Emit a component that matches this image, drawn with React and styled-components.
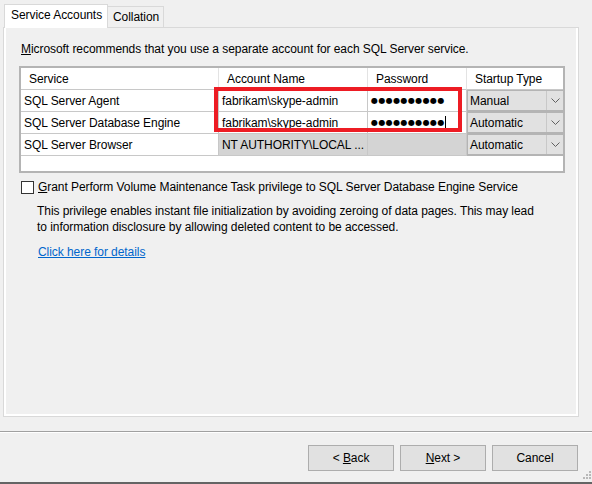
import React from "react";
import styled, { createGlobalStyle } from "styled-components";

const GlobalStyle = createGlobalStyle`
  html, body {
    margin: 0;
    padding: 0;
    background: #f0f0f0;
  }
  body {
    font-family: "Liberation Sans", Arial, sans-serif;
    font-size: 12px;
    letter-spacing: -0.06px;
    color: #000;
  }
`;

const services = [
  { name: "SQL Server Agent", account: "fabrikam\\skype-admin", password: true, startup: "Manual" },
  { name: "SQL Server Database Engine", account: "fabrikam\\skype-admin", password: true, caret: true, startup: "Automatic" },
  { name: "SQL Server Browser", account: "NT AUTHORITY\\LOCAL ...", disabled: true, startup: "Automatic" },
];

const App = () => {
  return (
    <Window>
      <GlobalStyle />
      <TabStrip>
        <Tab $active>Service Accounts</Tab>
        <Tab>Collation</Tab>
      </TabStrip>

      <Panel>
        <Intro>
          <u>M</u>icrosoft recommends that you use a separate account for each SQL Server service.
        </Intro>

        <TableWrap>
          <Grid>
            <HeadCell>Service</HeadCell>
            <HeadCell>Account Name</HeadCell>
            <HeadCell>Password</HeadCell>
            <HeadCell $last>Startup Type</HeadCell>

            {services.map((s) => (
              <React.Fragment key={s.name}>
                <Cell>{s.name}</Cell>
                <Cell $disabled={s.disabled}>{s.account}</Cell>
                <Cell $disabled={s.disabled}>
                  {s.password && <Dots>●●●●●●●●●●</Dots>}
                  {s.caret && <Caret />}
                </Cell>
                <Combo>
                  <ComboText>{s.startup}</ComboText>
                  <ComboButton>
                    <svg width="9" height="5" viewBox="0 0 9 5">
                      <path d="M0.5 0.5 L4.5 4.5 L8.5 0.5" fill="none" stroke="#606060" strokeWidth="1" />
                    </svg>
                  </ComboButton>
                </Combo>
              </React.Fragment>
            ))}
          </Grid>
          <EmptyArea />
          <Highlight />
        </TableWrap>

        <CheckRow>
          <CheckBox />
          <span>
            <u>G</u>rant Perform Volume Maintenance Task privilege to SQL Server Database Engine Service
          </span>
        </CheckRow>

        <Description>
          This privilege enables instant file initialization by avoiding zeroing of data pages. This may lead
          <br />
          to information disclosure by allowing deleted content to be accessed.
        </Description>

        <DetailsLink href="#">Click here for details</DetailsLink>
      </Panel>

      <Separator />

      <ButtonBar>
        <Button>
          &lt; <u>B</u>ack
        </Button>
        <Button>
          <u>N</u>ext &gt;
        </Button>
        <Button>Cancel</Button>
      </ButtonBar>

      <Grip>
        <svg width="10" height="10" viewBox="0 0 10 10">
          {[
            [8, 0], [8, 3], [5, 3], [8, 6], [5, 6], [2, 6],
          ].map(([x, y]) => (
            <rect key={`${x}-${y}`} x={x} y={y} width="2" height="2" fill="#b8b8b8" />
          ))}
        </svg>
      </Grip>
      <BottomEdge />
    </Window>
  );
};

const Window = styled.div`
  position: relative;
  width: 592px;
  height: 484px;
  display: flex;
  flex-direction: column;
  overflow: hidden;
  background: #f0f0f0;
`;

const TabStrip = styled.div`
  display: flex;
  align-items: flex-end;
  height: 27px;
  padding-left: 4px;
  box-sizing: border-box;
  position: relative;
  z-index: 1;
`;

const Tab = styled.div`
  box-sizing: border-box;
  height: ${(p) => (p.$active ? "24px" : "21px")};
  margin-bottom: ${(p) => (p.$active ? "-1px" : "0")};
  padding: ${(p) => (p.$active ? "3px 4px 0 6px" : "3px 3px 0 5px")};
  width: ${(p) => (p.$active ? "104px" : "57px")};
  border: 1px solid #d9d9d9;
  border-bottom: none;
  margin-left: ${(p) => (p.$active ? "0" : "-1px")};
  background: ${(p) => (p.$active ? "#ffffff" : "#f0f0f0")};
  white-space: nowrap;
  line-height: 15px;
`;

const Panel = styled.div`
  box-sizing: border-box;
  margin-left: 3px;
  width: 576px;
  height: 390px;
  border: 1px solid #d9d9d9;
  box-shadow: inset 2px 0 0 #fff, inset -2px 0 0 #fff, inset 0 -2px 0 #fff;
  padding: 14px 0 0 15px;
  display: flex;
  flex-direction: column;
  align-items: flex-start;
`;

const Intro = styled.div`
  margin-left: 2px;
  line-height: 15px;
  white-space: nowrap;
`;

const TableWrap = styled.div`
  position: relative;
  margin-top: 9px;
  width: 546px;
  box-sizing: border-box;
  border: 2px solid #b4b4b4;
  background: #fff;
`;

const Grid = styled.div`
  display: grid;
  grid-template-columns: 198px 149px 99px 96px;
  grid-auto-rows: 22px;
`;

const HeadCell = styled.div`
  box-sizing: border-box;
  padding: 0 0 0 8px;
  display: flex;
  align-items: center;
  border-right: ${(p) => (p.$last ? "none" : "1px solid #e3e3e3")};
  border-bottom: 1px solid #c8c8c8;
  white-space: nowrap;
`;

const Cell = styled.div`
  box-sizing: border-box;
  padding: 0 0 0 3px;
  display: flex;
  align-items: center;
  border-right: 1px solid #c8c8c8;
  border-bottom: 1px solid #c8c8c8;
  background: ${(p) => (p.$disabled ? "#d4d4d4" : "#fff")};
  white-space: nowrap;
  overflow: hidden;
`;

const Dots = styled.span`
  font-family: "DejaVu Sans", sans-serif;
  font-size: 8px;
  letter-spacing: 0.4px;
  line-height: 1;
`;

const Caret = styled.span`
  display: inline-block;
  width: 1px;
  height: 14px;
  background: #000;
  margin-left: 0;
`;

const Combo = styled.div`
  box-sizing: border-box;
  display: flex;
  background: #e1e1e1;
  border: 1px solid #b4b4b4;
  border-bottom-width: 2px;
  border-right: none;
`;

const ComboText = styled.div`
  flex: 1;
  display: flex;
  align-items: center;
  padding-left: 2px;
  white-space: nowrap;
`;

const ComboButton = styled.div`
  width: 16px;
  border-left: 1px solid #c8c8c8;
  display: flex;
  align-items: center;
  justify-content: center;
`;

const EmptyArea = styled.div`
  height: 15px;
`;

const Highlight = styled.div`
  position: absolute;
  left: 193px;
  top: 19px;
  width: 248px;
  height: 45px;
  box-sizing: border-box;
  border: 4px solid #ed1c24;
  pointer-events: none;
`;

const CheckRow = styled.div`
  margin-top: 7px;
  margin-left: 2px;
  display: flex;
  align-items: center;
  gap: 4px;
  line-height: 15px;
  white-space: nowrap;
`;

const CheckBox = styled.span`
  box-sizing: border-box;
  width: 13px;
  height: 13px;
  border: 1px solid #333;
  background: #fff;
`;

const Description = styled.div`
  margin-top: 8px;
  margin-left: 18px;
  line-height: 16px;
  white-space: nowrap;
`;

const DetailsLink = styled.a`
  margin-top: 10px;
  margin-left: 19px;
  line-height: 15px;
  color: #0066cc;
  text-decoration: underline;
`;

const Separator = styled.div`
  margin-top: 14px;
  height: 1px;
  background: #a0a0a0;
  border-bottom: 1px solid #fff;
`;

const ButtonBar = styled.div`
  margin-top: 12px;
  display: flex;
  justify-content: flex-end;
  gap: 6px;
  padding-right: 14px;
`;

const Button = styled.div`
  box-sizing: border-box;
  width: 86px;
  height: 26px;
  border: 1px solid #adadad;
  background: #e1e1e1;
  display: flex;
  align-items: center;
  justify-content: center;
  white-space: pre;
`;

const Grip = styled.div`
  position: absolute;
  right: 1px;
  bottom: 3px;
  width: 10px;
  height: 10px;
  line-height: 0;
`;

const BottomEdge = styled.div`
  position: absolute;
  left: 0;
  right: 0;
  bottom: 0;
  height: 2px;
  background: #646464;
`;

export default App;
